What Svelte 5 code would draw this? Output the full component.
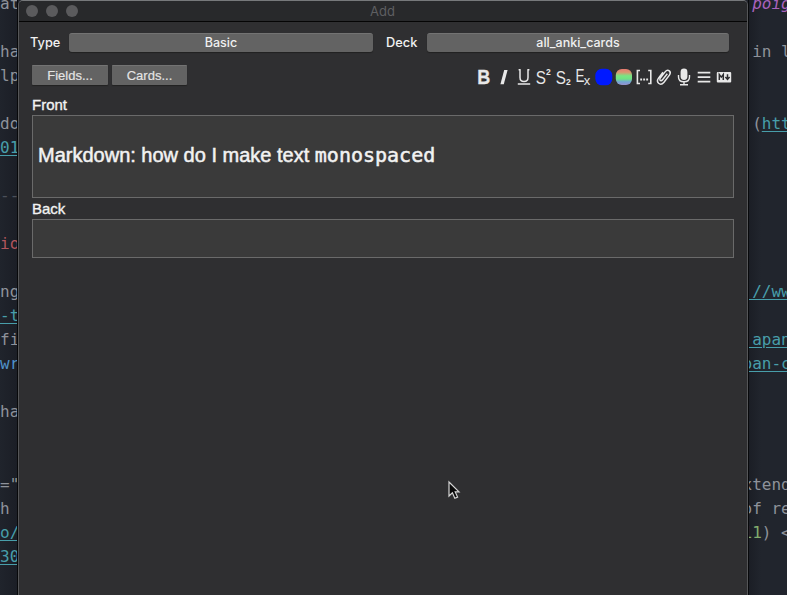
<script>
  const left = { 0: ['at'], 2: ['ha'], 3: ['lp'], 5: ['do'], 6: ['01', 'link'], 8: ['--', 'rule'], 10: ['io', 'red'], 12: ['ng'], 13: ['-t', 'link'], 14: ['fi'], 15: ['wr', 'blue'], 17: ['ha'], 20: ['="'], 21: ['h'], 22: ['o/', 'link'], 23: ['30', 'link'] };
  const right = {
    0: [[' ', ''], ['poig', 'purple']],
    2: [[' in l', '']],
    5: [[' (', ''], ['htt', 'link']],
    12: [['://ww', 'link']],
    14: [['japan', 'link']],
    15: [['pan-c', 'link']],
    20: [['xtend', '']],
    21: [['of re', '']],
    22: [['11', 'green'], [') <', '']]
  };
  const rows = Array.from({ length: 25 }, (_, i) => i);
</script>

<div class="screen">
  <div class="editor left">
    {#each rows as r}
      <div class="line">{#if left[r]}<span class={left[r][1] ?? ''}>{left[r][0]}</span>{/if}</div>
    {/each}
  </div>

  <main class="window">
    <header>
      <div class="lights"><i></i><i></i><i></i></div>
      <span class="title">Add</span>
    </header>
    <div class="choosers">
      <span class="label type">Type</span>
      <button class="basic">Basic</button>
      <span class="label deck">Deck</span>
      <button class="all">all_anki_cards</button>
    </div>
    <div class="tools">
      <button class="fields">Fields...</button>
      <button class="cards">Cards...</button>
      <div class="icons">
        <svg viewBox="0 0 20 20"><text class="b" x="3.2" y="17.2" font-size="20.5" font-weight="700" textLength="13" lengthAdjust="spacingAndGlyphs">B</text></svg>
        <svg viewBox="0 0 20 20"><path d="M10.2 3h3.4L9.8 17.2H6.4z" /></svg>
        <svg viewBox="0 0 20 20"><path class="s" stroke-width="1.5" d="M6 2.5v8q0 4 4 4t4-4v-8M3.8 17h12.4M4.6 2.7h2M13.4 2.7h2" /></svg>
        <svg viewBox="0 0 20 20"><text x="1.8" y="16.5" font-size="18.5" textLength="10.2" lengthAdjust="spacingAndGlyphs">S</text><text x="12" y="8.2" font-size="8.5" class="bold">2</text></svg>
        <svg viewBox="0 0 20 20"><text x="1.8" y="16.5" font-size="18.5" textLength="10.2" lengthAdjust="spacingAndGlyphs">S</text><text x="12" y="18.2" font-size="8.5" class="bold">2</text></svg>
        <svg viewBox="0 0 20 20"><text x="1.4" y="15" font-size="18" textLength="9" lengthAdjust="spacingAndGlyphs">E</text><text x="9.8" y="18" font-size="13">x</text></svg>
        <svg viewBox="0 0 20 20"><rect x="1.3" y="1.8" width="17" height="16.5" rx="6.5" fill="#0019ff" /></svg>
        <svg viewBox="0 0 20 20">
          <defs><linearGradient id="spectrum" x1="0" y1="0" x2="0" y2="1"><stop offset="0" stop-color="#e8796f" /><stop offset=".22" stop-color="#d69a72" /><stop offset=".43" stop-color="#78e683" /><stop offset=".62" stop-color="#70e184" /><stop offset=".8" stop-color="#73a5d4" /><stop offset="1" stop-color="#9790cc" /></linearGradient></defs>
          <rect x="1.8" y="2" width="16.2" height="16" rx="6" fill="url(#spectrum)" />
        </svg>
        <svg viewBox="0 0 20 20"><path class="s" stroke-width="1.6" d="M6 3.5H3.4v13H6M14.2 3.5h2.6v13h-2.6" /><path d="M6.2 11.5h1.9v2H6.2zM9.2 11.5h1.9v2H9.2zM12.2 11.5h1.9v2h-1.9z" /></svg>
        <svg viewBox="0 0 20 20"><path class="s" stroke-width="1.5" d="M13.3 6.8L8.4 12.9Q7 14.3 6.1 13.2Q5.4 12.2 6.5 10.8L11.1 4.9Q13.2 2.3 15.3 3.9Q17.2 5.5 15.4 8.1L10 15.2Q7.2 18.5 4.6 16.3Q2.3 14.1 4.5 11.1L9 5.2" /></svg>
        <svg viewBox="0 0 20 20"><rect x="6.6" y="1.6" width="6.8" height="11.4" rx="3.4" /><path class="s" stroke-width="1.4" d="M4.5 8v1.9q0 4.8 5.5 4.8t5.5-4.8V8M10 14.5v3" /><path d="M6 17h8v1.6H6z" /></svg>
        <svg viewBox="0 0 20 20"><path d="M3.7 4.8h12.6v1.6H3.7zM3.7 9.3h12.6v1.6H3.7zM3.7 13.8h12.6v1.6H3.7z" /></svg>
        <svg viewBox="0 0 20 20"><rect x="2.8" y="5" width="14.4" height="10.4" rx="1" /><path d="M5.3 12.9V7.5L7.3 10.1l2-2.6v5.4M13.5 7.2v5M11.4 10l2.1 2.4 2.1-2.4" fill="none" stroke="#2d2d2f" stroke-width="1.5" /></svg>
      </div>
    </div>
    <div class="name">Front</div>
    <div class="field front"><span>Markdown: how do I make text <code>monospaced</code></span></div>
    <div class="name back">Back</div>
    <div class="field empty"></div>
    <svg class="cursor" viewBox="0 0 14 20"><path d="M2 2v14l3.4-3.2 2.4 5.5 2.8-1.2-2.4-5.2H12z" fill="#090909" stroke="#d5d5d5" stroke-width="1.2" /></svg>
  </main>

  <div class="editor right">
    {#each rows as r}
      <div class="line">{#each right[r] ?? [] as part}<span class={part[1]}>{part[0]}</span>{/each}</div>
    {/each}
  </div>
</div>

<style>
  :global(body) { margin: 0; overflow: hidden; background: #20232b; }
  .screen { display: flex; width: 787px; height: 595px; overflow: hidden; background: #20232b; }
  .editor { overflow: hidden; box-sizing: border-box; padding-top: 0.2px; font: 16px/24px "DejaVu Sans Mono", monospace; color: #8e929a; white-space: pre; }
  .left { width: 18px; border-right: 1px solid #08090b; background: linear-gradient(90deg, #20242c, #1b1e26); }
  .right { width: 39px; border-left: 1px solid #08090b; background: linear-gradient(90deg, #1b1e25, #21252d 12px); }
  .line { height: 24.03px; position: relative; top: -8px; }
  .right .line { margin-left: -6.5px; }
  .link { color: #489eaa; text-decoration: underline; text-decoration-thickness: 1px; text-underline-offset: 2px; }
  .red { color: #b3555d; }
  .blue { color: #4f92c9; }
  .purple { color: #a962bd; font-style: italic; }
  .green { color: #82ac6d; }
  .rule { color: #4b505a; }
  .window { width: 730px; height: 595px; box-sizing: border-box; border: 1px solid #555658; border-top-color: #77797b; border-bottom: 0; border-radius: 5px 5px 0 0; background: #2f2f31; overflow: hidden; position: relative; color: #f2f2f2; font-family: Inter, "Liberation Sans", sans-serif; }
  header { height: 21px; box-sizing: border-box; border-bottom: 1px solid #050505; background: #28292b; display: flex; align-items: center; }
  .lights { display: flex; gap: 8px; padding-left: 7px; width: 100px; box-sizing: border-box; }
  .lights i { width: 12px; height: 12px; border-radius: 50%; background: #5b5b5d; }
  .title { flex: 1; margin-right: 101px; text-align: center; font-size: 13px; color: #5e5f61; }
  .choosers { display: flex; align-items: center; height: 19px; margin-top: 11px; padding-left: 11px; }
  .label { font-size: 12.8px; line-height: 17px; font-weight: 500; white-space: nowrap; }
  .type { width: 39px; }
  .deck { width: 41px; margin-left: 13px; }
  button { margin: 0; padding: 0; border: 0; color: #f0f0f0; font: 500 12.5px/16px Inter, sans-serif; background: #636363; border-top: 1px solid #737373; box-sizing: border-box; border-radius: 3px; height: 19px; box-shadow: 0 1px 1px #222; }
  .basic { width: 304px; }
  .all { width: 302px; }
  .tools { display: flex; align-items: center; height: 20px; margin: 13px 13px 0; }
  .tools button { border-radius: 1px; height: 20px; font: 13px/17px "Liberation Sans", sans-serif; color: #e5e5e5; -webkit-text-stroke: .15px #e5e5e5; }
  .fields { width: 76px; }
  .cards { width: 75px; margin-left: 4px; }
  .icons { display: flex; margin-left: auto; padding-top: 4px; }
  .icons svg { width: 20px; height: 20px; fill: #e8e8e8; font-family: "Liberation Sans", sans-serif; }
  .s { fill: none; stroke: #e8e8e8; }
  .b { stroke: #e8e8e8; stroke-width: .3px; }
  .bold { font-weight: 700; }
  .name { height: 17px; margin: 11px 13px 2px; font: 15px/17px "Liberation Sans", sans-serif; -webkit-text-stroke: .35px #f2f2f2; }
  .name.back { margin-top: 2px; margin-bottom: 2px; }
  .field { margin: 0 13px; border: 1px solid #6a6a6a; background: #3a3a3a; box-sizing: border-box; }
  .front { height: 83px; display: flex; align-items: center; padding: 0 5px 4px; font: 20px/24px "Liberation Sans", sans-serif; white-space: nowrap; -webkit-text-stroke: .5px #f2f2f2; }
  code { font: 20px/24px "DejaVu Sans Mono", monospace; }
  .empty { height: 39px; }
  .cursor { position: absolute; left: 428px; top: 479px; width: 14px; height: 20px; }
</style>
